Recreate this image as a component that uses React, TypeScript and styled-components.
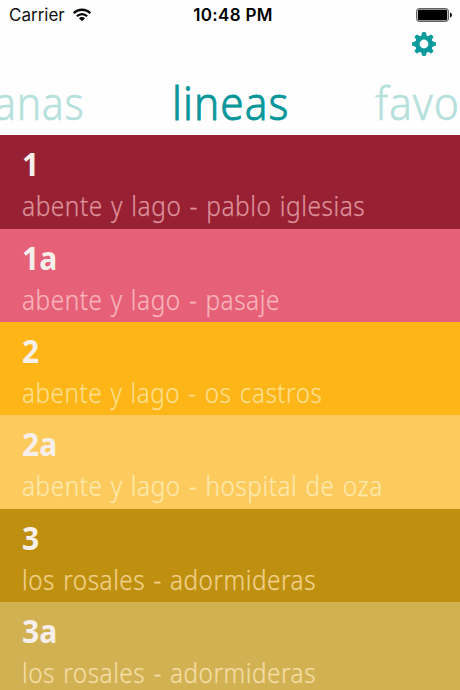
import React from 'react';
import styled, { createGlobalStyle } from 'styled-components';

const GlobalStyle = createGlobalStyle`
  * { box-sizing: border-box; }
  body { margin: 0; background: #fefefe; overflow: hidden; }
`;

const Screen = styled.main`
  width: 460px;
  height: 690px;
  overflow: hidden;
  display: flex;
  flex-direction: column;
  background: #fefefe;
  font-family: 'Noto Sans', sans-serif;
`;

const StatusBar = styled.header`
  flex: none;
  height: 30px;
  padding: 0 8px 0 9px;
  display: grid;
  grid-template-columns: 1fr auto 1fr;
  align-items: center;
  font: 400 17px/30px Inter, sans-serif;
  color: #111;
`;

const Carrier = styled.div`
  display: flex;
  align-items: center;
  gap: 8px;
`;

const Clock = styled.div`
  font-weight: 600;
  font-size: 17px;
  letter-spacing: 0.3px;
  color: #000;
  padding-left: 5px;
`;

const Battery = styled.svg`
  justify-self: end;
`;

const Toolbar = styled.div`
  flex: none;
  height: 28px;
  padding: 0 23px 1px 0;
  display: flex;
  justify-content: flex-end;
  align-items: center;
`;

const SettingsButton = styled.button`
  width: 26px;
  height: 26px;
  padding: 0;
  border: 0;
  background: none;
  display: grid;
  place-items: center;
`;

const Tabs = styled.nav`
  flex: none;
  height: 77.3px;
  display: grid;
  grid-template-columns: 173px 202px 85px;
  overflow: hidden;
`;

const Tab = styled.div<{ $active?: boolean; $shift?: number; $stretch: number; $spacing: number }>`
  margin-left: ${p => p.$shift ?? 0}px;
  padding-top: 19px;
  font-size: 45px;
  line-height: 52px;
  font-weight: 300;
  letter-spacing: ${p => p.$spacing}px;
  white-space: nowrap;
  transform: scaleX(${p => p.$stretch});
  transform-origin: left;
  color: ${p => (p.$active ? '#07979a' : '#b5e0dc')};
  -webkit-text-stroke: ${p => (p.$active ? 0.9 : 0.5)}px currentColor;
`;

const Lines = styled.ul`
  list-style: none;
  margin: 0;
  padding: 0;
`;

const Line = styled.li<{ $color: string }>`
  height: 93.4px;
  padding: 8px 22px 0;
  background: ${p => p.$color};
  white-space: nowrap;
`;

const Code = styled.div`
  font-size: 33px;
  line-height: 42px;
  font-weight: 700;
  color: #f7efeb;
  transform: scaleX(0.91);
  transform-origin: left;
`;

const Route = styled.div<{ $color: string; $stretch: number }>`
  font-size: 27px;
  line-height: 42.4px;
  font-weight: 300;
  letter-spacing: 0.6px;
  word-spacing: 1.5px;
  color: ${p => p.$color};
  -webkit-text-stroke: 0.25px currentColor;
  width: max-content;
  transform: scaleX(${p => p.$stretch});
  transform-origin: left;
`;

const lines = [
  { code: '1', route: 'abente y lago - pablo iglesias', color: '#982033', ink: '#de929c', stretch: 0.905 },
  { code: '1a', route: 'abente y lago - pasaje', color: '#e66078', ink: '#f8b5bd', stretch: 0.901 },
  { code: '2', route: 'abente y lago - os castros', color: '#fdb517', ink: '#ffdf8d', stretch: 0.898 },
  { code: '2a', route: 'abente y lago - hospital de oza', color: '#fdcb5d', ink: '#ffe8ac', stretch: 0.901 },
  { code: '3', route: 'los rosales - adormideras', color: '#bf900f', ink: '#f1d18b', stretch: 0.899 },
  { code: '3a', route: 'los rosales - adormideras', color: '#d1b152', ink: '#f5dda6', stretch: 0.899 },
];

const Wifi = () => (
  <svg width="18" height="14" viewBox="0 0 18 14" fill="none" stroke="#080808" strokeWidth="2.3">
    <path d="M.7 5.2C5.2 .6 12.8 .6 17.3 5.2M3.9 8.3C6.8 5.4 11.2 5.4 14.1 8.3" />
    <path d="M9 13.3 5.9 10.2C7.6 8.7 10.4 8.7 12.1 10.2Z" fill="#080808" stroke="none" />
  </svg>
);

const Gear = () => (
  <svg width="26" height="26" viewBox="-13 -13 26 26">
    <circle r="6.6" fill="none" stroke="#0c9a9d" strokeWidth="4.4" />
    {[0, 45, 90, 135, 180, 225, 270, 315].map(a => (
      <path key={a} transform={`rotate(${a})`} fill="#0c9a9d" d="M-3.8-7.2-2.4-9-2-11.2Q-1.8-12 0-12T2-11.2L2.4-9 3.8-7.2Z" />
    ))}
  </svg>
);

export default function App() {
  return (
    <>
      <GlobalStyle />
      <Screen>
        <StatusBar>
          <Carrier>Carrier <Wifi /></Carrier>
          <Clock>10:48 PM</Clock>
          <Battery width="36" height="14" viewBox="0 0 36 14">
            <rect x=".6" y=".6" width="31.8" height="12.8" rx="2.5" fill="#ccc" stroke="#555" />
            <rect x="2" y="1.7" width="29" height="10.6" rx="1" />
            <path d="M34 4.6Q36 5.3 36 7T34 9.4Z" />
          </Battery>
        </StatusBar>
        <Toolbar>
          <SettingsButton aria-label="ajustes"><Gear /></SettingsButton>
        </Toolbar>
        <Tabs>
          <Tab $shift={-6} $stretch={0.91} $spacing={0.8}>anas</Tab>
          <Tab $active $shift={-1} $stretch={0.94} $spacing={1.2}>lineas</Tab>
          <Tab $stretch={0.95} $spacing={0.9}>favo</Tab>
        </Tabs>
        <Lines>
          {lines.map(l => (
            <Line key={l.code} $color={l.color}>
              <Code>{l.code}</Code>
              <Route $color={l.ink} $stretch={l.stretch}>{l.route}</Route>
            </Line>
          ))}
        </Lines>
      </Screen>
    </>
  );
}
